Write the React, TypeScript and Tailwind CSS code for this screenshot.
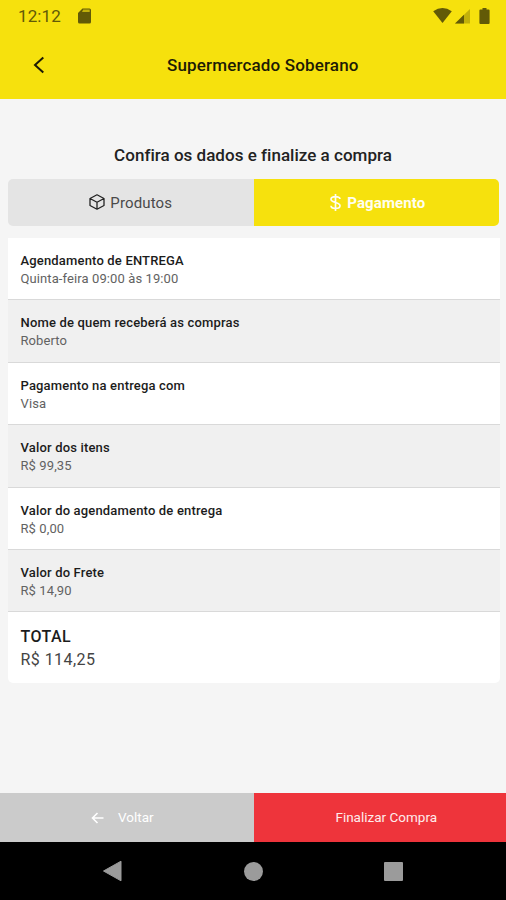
import React from "react";

type RowProps = {
  label: string;
  value: string;
};

const rows: RowProps[] = [
  { label: "Agendamento de ENTREGA", value: "Quinta-feira 09:00 às 19:00" },
  { label: "Nome de quem receberá as compras", value: "Roberto" },
  { label: "Pagamento na entrega com", value: "Visa" },
  { label: "Valor dos itens", value: "R$ 99,35" },
  { label: "Valor do agendamento de entrega", value: "R$ 0,00" },
  { label: "Valor do Frete", value: "R$ 14,90" },
];

const StatusBar = () => {
  return (
    <div className="flex h-8 items-center justify-between pl-[18px] pr-[16px] text-[#625a07]">
      <div className="flex items-center">
        <span className="w-[60px] text-[17px] leading-8 tracking-[0.1px]">12:12</span>
        <svg className="h-4 w-[13px]" viewBox="0 0 13 16" fill="currentColor">
          <path d="M4.5 0.5H11.5Q13 0.5 13 2V14Q13 15.5 11.5 15.5H1.5Q0 15.5 0 14V5Z" />
          <path d="M5.2 1.5H11.7V4H4Z" fill="#f6e10d" opacity="0.65" />
        </svg>
      </div>
      <div className="flex items-center">
        <svg className="mr-[3px] h-4 w-[19px]" viewBox="0 0 19 16" fill="currentColor">
          <path d="M0.2 3.3Q9.5 -3.3 18.8 3.3L9.5 15Z" />
        </svg>
        <svg className="mr-[9px] h-4 w-[15px]" viewBox="0 0 15 16" fill="currentColor">
          <path d="M15 1V15.5H0Z" opacity="0.35" />
          <path d="M9 6.8V15.5H0Z" />
        </svg>
        <svg className="h-4 w-[11px]" viewBox="0 0 11 16" fill="currentColor">
          <path d="M3.5 0H7.5V1.5H9.6Q10.6 1.5 10.6 2.5V15Q10.6 16 9.6 16H1.4Q0.4 16 0.4 15V2.5Q0.4 1.5 1.4 1.5H3.5Z" />
        </svg>
      </div>
    </div>
  );
};

const Row = ({ label, value }: RowProps) => {
  return (
    <div className="h-[62.4px] border-b-[1.5px] border-[#d9d9d9] bg-white pl-[12.5px] pt-[13px] even:bg-[#f0f0f0]">
      <p className="text-[13px] font-medium leading-[19px] tracking-[0.17px] text-[#1c1c1c]">
        {label}
      </p>
      <p className="text-[13px] leading-[18px] tracking-[0.1px] text-[#626262]">{value}</p>
    </div>
  );
};

const App = () => {
  return (
    <div className="flex h-[900px] w-[506px] flex-col overflow-hidden bg-[#f5f5f5] font-['Roboto',sans-serif]">
      <header className="h-[98.5px] shrink-0 bg-[#f6e10d]">
        <StatusBar />
        <div className="grid h-[66px] grid-cols-[100px_1fr_80px] items-center">
          <svg
            className="ml-[33px] h-[18px] w-3"
            viewBox="0 0 12 18"
            fill="none"
            stroke="#1d1b05"
            strokeWidth="2"
          >
            <path d="M10.3 1.5L2 9L10.3 16.5" />
          </svg>
          <h1 className="whitespace-nowrap pl-[67px] pt-[2px] text-[17px] font-medium tracking-[0.16px] text-[#1d1b05]">
            Supermercado Soberano
          </h1>
        </div>
      </header>

      <main className="flex-1 px-2 pt-[44px]">
        <h2 className="text-center text-[17px] font-medium leading-6 tracking-[0.02px] text-[#222]">
          Confira os dados e finalize a compra
        </h2>

        <div className="mt-3 flex h-[47px] w-[491px] overflow-hidden rounded-[5px]">
          <div className="flex w-[245.5px] items-center justify-center bg-[#e4e4e4] text-[15px] text-[#4a4a4a]">
            <svg
              className="mr-[5px] h-4 w-4"
              viewBox="0 0 16 16"
              fill="none"
              stroke="#222"
              strokeWidth="1.3"
              strokeLinejoin="round"
            >
              <path d="M8 0.8L15 4.5V11.5L8 15.2L1 11.5V4.5ZM1 4.5L8 8.2L15 4.5M8 8.2V15.2" />
            </svg>
            <span className="pt-[2px] tracking-[0.15px]">Produtos</span>
          </div>
          <div className="flex flex-1 items-center justify-center bg-[#f6e10d] pl-[3px] text-[15px] font-bold text-[#fffef0]">
            <svg
              className="mr-[6px] h-[17px] w-[11px]"
              viewBox="0 0 11 17"
              fill="none"
              stroke="currentColor"
              strokeWidth="1.7"
            >
              <path d="M10 5C10 1.7 1 1.7 1 5.3C1 9.2 10 7.8 10 11.7C10 15.3 1 15.3 1 11.7M5.5 0V17" />
            </svg>
            <span className="pt-[2px] tracking-[0.1px]">Pagamento</span>
          </div>
        </div>

        <div className="mt-[12.5px] w-[492px] overflow-hidden rounded-b-[5px] bg-white">
          {rows.map((row) => (
            <Row key={row.label} {...row} />
          ))}
          <div className="h-[70.5px] pl-[12.5px] pt-[13px]">
            <p className="text-base font-medium leading-6 tracking-[0.4px] text-[#1c1c1c]">TOTAL</p>
            <p className="text-base leading-[22px] tracking-[0.45px] text-[#444]">R$ 114,25</p>
          </div>
        </div>
      </main>

      <footer className="shrink-0">
        <div className="flex h-[49px] text-[13.5px]">
          <button className="flex w-[253.5px] items-center bg-[#cbcbcb] pl-[91px] text-white">
            <svg
              className="mr-[14px] h-3 w-[13px]"
              viewBox="0 0 13 12"
              fill="none"
              stroke="currentColor"
              strokeWidth="1.6"
            >
              <path d="M12.5 6H1.5M6.5 1L1.5 6L6.5 11" />
            </svg>
            <span>Voltar</span>
          </button>
          <button className="flex-1 bg-[#ee343b] pl-[13px] text-[#ffecec]">Finalizar Compra</button>
        </div>
        <div className="grid h-[58px] grid-cols-[103px_141px_139px_1fr] items-center bg-black text-[#9b9b9b]">
          <span />
          <svg className="h-[22px] w-[19px]" viewBox="0 0 19 22" fill="currentColor">
            <path d="M18 1.2V20.8L0.5 11Z" stroke="currentColor" strokeLinejoin="round" />
          </svg>
          <span className="size-[19px] rounded-full bg-[#9b9b9b]" />
          <span className="ml-[1px] size-[19px] rounded-[1px] bg-[#9b9b9b]" />
        </div>
      </footer>
    </div>
  );
};

export default App;
